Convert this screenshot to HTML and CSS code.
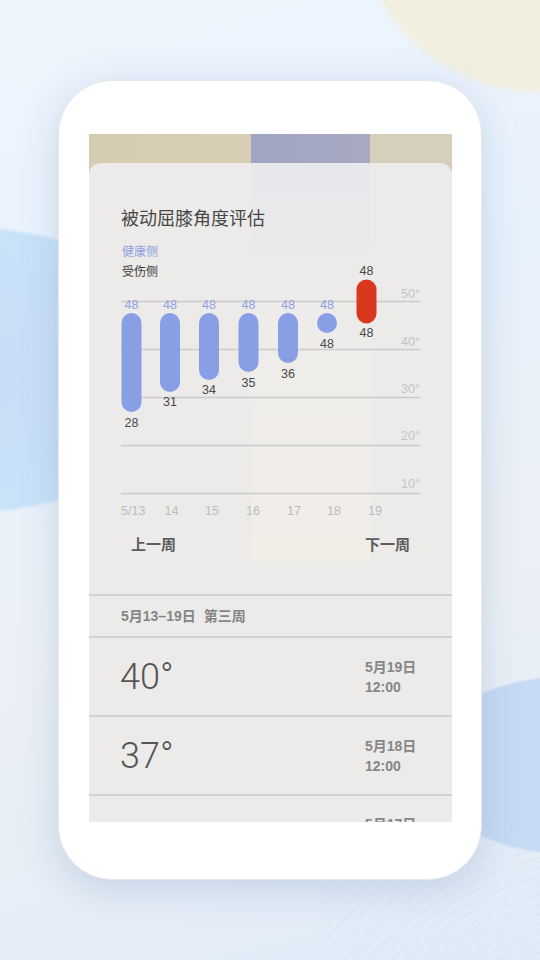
FILE: index.html
```html
<!DOCTYPE html>
<html lang="zh-CN">
<head>
<meta charset="utf-8">
<title>被动屈膝角度评估</title>
<link rel="stylesheet" href="styles.css">
</head>
<body>
<div class="page">
  <div class="phone">
    <div class="screen">
      <div class="band"><span class="seg seg-a"></span><span class="seg seg-b"></span><span class="seg seg-c"></span></div>
      <div class="card">
        <div class="stripe"></div>
        <h1 class="title">被动屈膝角度评估</h1>
        <div class="legend">
          <div class="healthy">健康侧</div>
          <div class="injured">受伤侧</div>
        </div>
        <svg class="chart" width="363" height="275" viewBox="89 255 363 275" xmlns="http://www.w3.org/2000/svg">
          <g class="grid">
            <line x1="121" y1="301.5" x2="420" y2="301.5"/>
            <line x1="121" y1="349.5" x2="420" y2="349.5"/>
            <line x1="121" y1="397.5" x2="420" y2="397.5"/>
            <line x1="121" y1="445.5" x2="420" y2="445.5"/>
            <line x1="121" y1="493.5" x2="420" y2="493.5"/>
          </g>
          <g class="axis" text-anchor="end">
            <text x="420" y="297.5">50°</text>
            <text x="420" y="345.5">40°</text>
            <text x="420" y="393">30°</text>
            <text x="420" y="440">20°</text>
            <text x="420" y="488">10°</text>
          </g>
          <g class="bars">
            <rect x="121.5" y="313" width="20" height="99" rx="10"/>
            <rect x="160" y="313" width="20" height="79" rx="10"/>
            <rect x="199" y="313" width="20" height="67" rx="10"/>
            <rect x="238.5" y="313" width="20" height="59" rx="10"/>
            <rect x="278" y="313" width="20" height="50" rx="10"/>
            <circle cx="327" cy="323" r="10"/>
          </g>
          <rect class="bar-red" x="356.5" y="279.5" width="20" height="44" rx="10"/>
          <g class="top-labels" text-anchor="middle">
            <text x="131.5" y="308.5">48</text>
            <text x="170" y="308.5">48</text>
            <text x="209" y="308.5">48</text>
            <text x="248.5" y="308.5">48</text>
            <text x="288" y="308.5">48</text>
            <text x="327" y="308.5">48</text>
          </g>
          <g class="low-labels" text-anchor="middle">
            <text x="131.5" y="426.5">28</text>
            <text x="170" y="406">31</text>
            <text x="209" y="393.5">34</text>
            <text x="248.5" y="386.5">35</text>
            <text x="288" y="377.5">36</text>
            <text x="327" y="347.5">48</text>
            <text x="366.5" y="274.5">48</text>
            <text x="366.5" y="336.5">48</text>
          </g>
          <g class="days" text-anchor="middle">
            <text x="121" y="514.5" text-anchor="start">5/13</text>
            <text x="171.5" y="514.5">14</text>
            <text x="212" y="514.5">15</text>
            <text x="253" y="514.5">16</text>
            <text x="294" y="514.5">17</text>
            <text x="334" y="514.5">18</text>
            <text x="375" y="514.5">19</text>
          </g>
        </svg>
        <div class="nav"><span>上一周</span><span>下一周</span></div>
        <div class="sep"></div>
        <div class="week">5月13–19日<span class="week-no">第三周</span></div>
        <div class="sep"></div>
        <div class="row">
          <div class="deg">40°</div>
          <div class="when"><div>5月19日</div><div>12:00</div></div>
        </div>
        <div class="sep"></div>
        <div class="row">
          <div class="deg">37°</div>
          <div class="when"><div>5月18日</div><div>12:00</div></div>
        </div>
        <div class="sep"></div>
        <div class="row row-cut">
          <div class="deg"></div>
          <div class="when"><div>5月17日</div></div>
        </div>
      </div>
    </div>
  </div>
</div>
</body>
</html>
```

FILE: styles.css
```css
* { box-sizing: border-box; }
html, body { margin: 0; padding: 0; }
body {
  font-family: "Liberation Sans", "Noto Sans CJK SC", sans-serif;
  width: 540px;
  height: 960px;
  overflow: hidden;
}
.page {
  width: 540px;
  height: 960px;
  padding: 80px 0 0 58px;
  background:
    radial-gradient(circle 188px at 540px -92px, rgba(242,239,224,1) 96%, rgba(242,239,224,0) 100%),
    radial-gradient(ellipse 240px 145px at -40px 370px, #c9ddf5 0%, #c8e2f8 97%, rgba(200,225,248,0) 100%),
    radial-gradient(ellipse 150px 90px at 570px 765px, #c6daf4 97%, rgba(198,218,244,0) 100%),
    repeating-radial-gradient(circle at 300px 380px, rgba(255,255,255,0) 0 8px, rgba(196,212,232,0.28) 8px 9px) right bottom / 220px 150px no-repeat,
    linear-gradient(165deg, #eef5fd 0%, #e7f1fc 35%, #ebf0f5 62%, #e0ebf8 100%);
}
.phone {
  width: 424px;
  height: 800px;
  background: #ffffff;
  border-radius: 54px;
  border: 1px solid #e6e8ec;
  box-shadow: 0 8px 36px rgba(110, 140, 180, 0.28);
  padding: 53px 29px 57px 30px;
}
.screen {
  width: 363px;
  height: 688px;
  overflow: hidden;
  display: flex;
  flex-direction: column;
  background: #d6cdb5;
}
.band {
  display: flex;
  height: 29px;
  flex: none;
}
.seg { display: block; height: 100%; }
.seg-a { width: 162px; background: linear-gradient(90deg, #d6ccb3, #d8ceb4); }
.seg-b { width: 119px; background: linear-gradient(90deg, #a0a5c3, #a7a9c1); }
.seg-c { flex: 1; background: #d5cfbc; }
.card {
  position: relative;
  flex: none;
  background: #ecebe9;
  border-radius: 12px 12px 0 0;
  padding-bottom: 40px;
}
.stripe {
  position: absolute;
  left: 162px;
  top: 0;
  width: 119px;
  height: 398px;
  background: linear-gradient(180deg, rgba(225,228,240,0.45) 0%, rgba(240,238,236,0.3) 40%, rgba(246,240,230,0.55) 100%);
  pointer-events: none;
}
.title {
  position: relative;
  margin: 42px 0 0 32px;
  font-size: 18px;
  line-height: 24px;
  font-weight: 400;
  color: #474747;
  font-family: "Noto Sans CJK SC", sans-serif;
}
.legend {
  position: relative;
  margin: 12px 0 0 33px;
  font-size: 12px;
  line-height: 20px;
  font-family: "Noto Sans CJK SC", sans-serif;
}
.healthy { color: #8ea2de; }
.injured { color: #3a3a3a; }
.chart {
  position: relative;
  display: block;
  margin-top: -26px;
  font-family: "Liberation Sans", sans-serif;
  font-size: 12.5px;
}
.grid line { stroke: #cbcbcb; stroke-width: 1.3; }
.axis text { fill: #c3c3c3; }
.bars rect, .bars circle { fill: #889ee5; }
.bar-red { fill: #d9381f; }
.top-labels text { fill: #8fa2e2; }
.low-labels text { fill: #484848; }
.days text { fill: #bcbcbc; }
.nav {
  position: relative;
  display: flex;
  justify-content: space-between;
  padding: 0 42px;
  height: 28px;
  line-height: 28px;
  font-size: 15px;
  font-weight: 600;
  color: #5c5c5c;
  font-family: "Noto Sans CJK SC", sans-serif;
}
.sep {
  height: 2px;
  background: #d2d2d2;
}
.nav + .sep { margin-top: 36px; }
.week {
  height: 40px;
  line-height: 40px;
  padding-left: 32px;
  font-size: 14px;
  font-weight: 600;
  color: #858585;
}
.week-no { margin-left: 8px; }
.row {
  height: 77px;
  display: flex;
  align-items: center;
  justify-content: space-between;
  padding: 0 35px 0 31px;
}
.row-cut {
  align-items: flex-start;
  padding-top: 18px;
}
.deg {
  font-family: Roboto, "Liberation Sans", sans-serif;
  font-weight: 300;
  font-size: 36px;
  color: #555555;
}
.when {
  width: 52px;
  font-size: 14px;
  line-height: 20px;
  font-weight: 600;
  color: #868686;
  white-space: nowrap;
}
```
